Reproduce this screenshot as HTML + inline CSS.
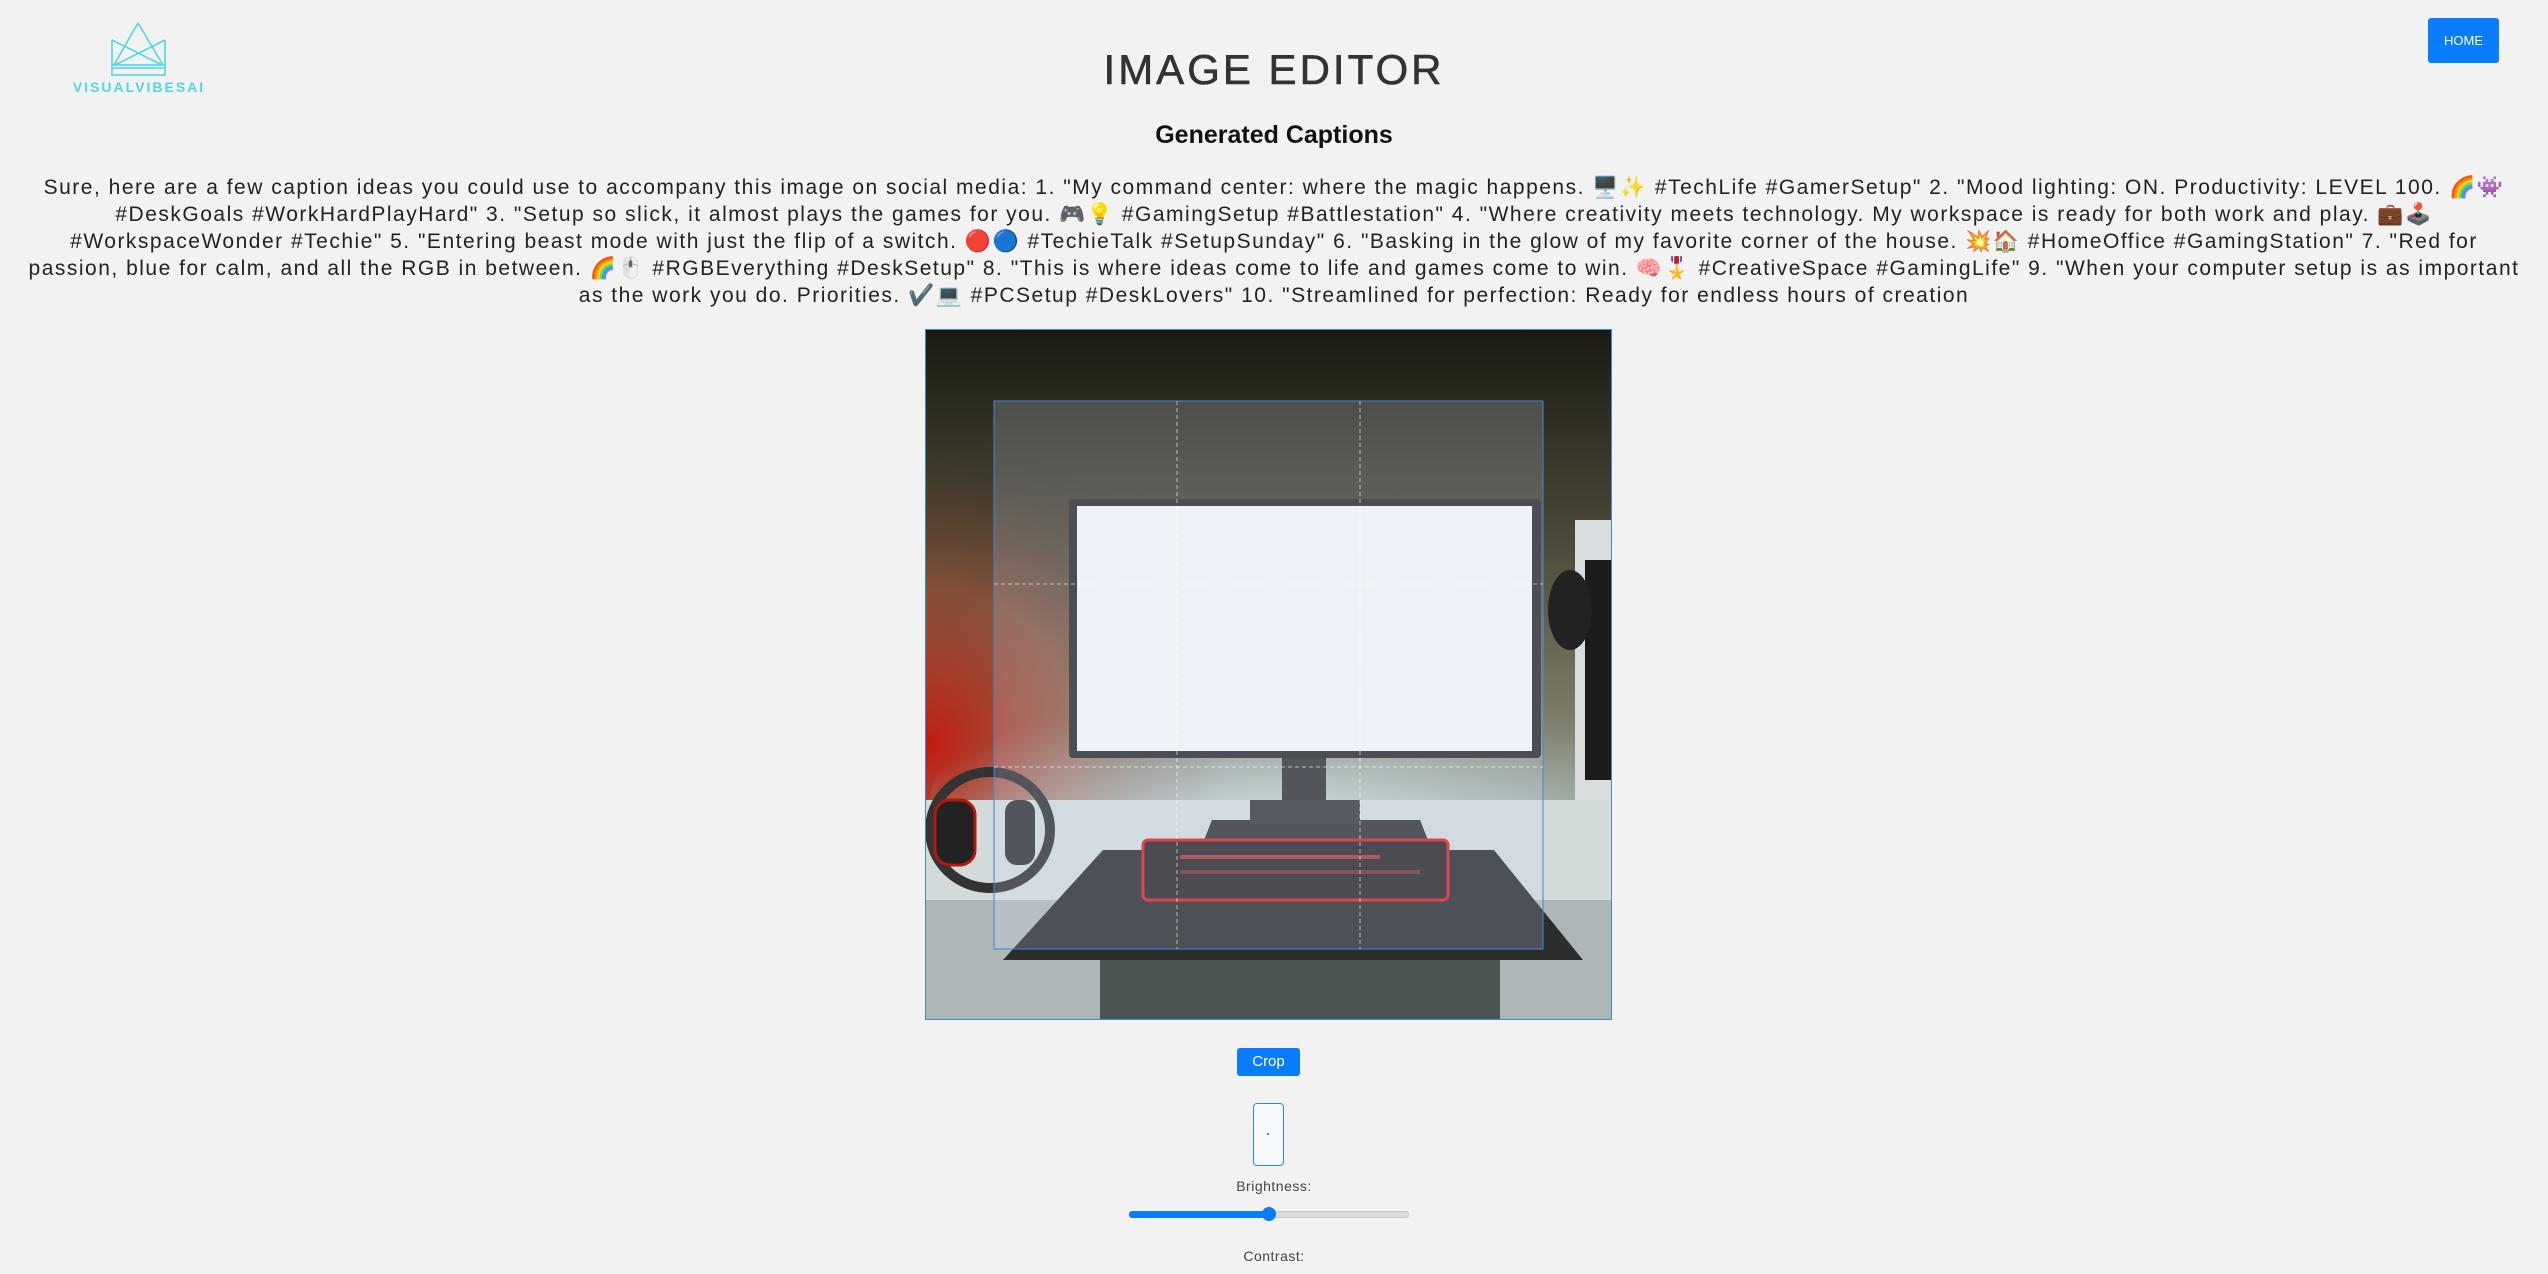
<!DOCTYPE html>
<html><head><meta charset="utf-8"><style>
html,body{margin:0;padding:0;background:#f2f2f2;width:2548px;height:1274px;overflow:hidden;font-family:"Liberation Sans",sans-serif;}
.abs{position:absolute}
#title{left:0;width:2548px;top:48px;text-align:center;font-size:42px;color:#333;letter-spacing:3px;line-height:44px;-webkit-text-stroke:0.6px #333}
#sub{left:0;width:2548px;top:120px;text-align:center;font-size:25px;font-weight:bold;color:#111;line-height:30px}
#cap{left:0;width:2548px;top:174px;text-align:center;font-size:21px;color:#222;line-height:27px;letter-spacing:1.5px}
#cap div{white-space:nowrap}
#home{left:2428px;top:18px;width:71px;height:45px;background:#0a7cff;color:#fff;font-size:13px;line-height:45px;text-align:center;border-radius:3px}
#crop{left:1237px;top:1048px;width:63px;height:28px;background:#0a7cff;color:#fff;font-size:15px;line-height:28px;text-align:center;border-radius:3px}
#box{left:1253px;top:1103px;width:29px;height:61px;border:1.5px solid #2a86ff;border-radius:4px;background:#f7f8fc}
.lbl{left:0;width:2548px;text-align:center;font-size:14px;color:#444;letter-spacing:.5px}
</style></head><body>
<svg class="abs" style="left:0;top:0" width="240" height="100">
<g fill="none" stroke="#4fd6e6" stroke-width="1.6">
<path d="M138 23 L114 65 M138 23 L163 65 M112 40 L112 65 M165 40 L165 65 M112 40 L162 65 M165 40 L115 65"/>
<rect x="112" y="65" width="53" height="10"/>
<line x1="112" y1="68" x2="165" y2="68"/>
</g>
<text x="139" y="92" text-anchor="middle" font-family="Liberation Sans" font-weight="bold" font-size="14" fill="#4fd6e6" letter-spacing="2">VISUALVIBESAI</text>
</svg>
<div id="title" class="abs">IMAGE EDITOR</div>
<div id="home" class="abs">HOME</div>
<div id="sub" class="abs">Generated Captions</div>
<div id="cap" class="abs">
<div>Sure, here are a few caption ideas you could use to accompany this image on social media: 1. "My command center: where the magic happens. 🖥️✨ #TechLife #GamerSetup" 2. "Mood lighting: ON. Productivity: LEVEL 100. 🌈👾</div>
<div>#DeskGoals #WorkHardPlayHard" 3. "Setup so slick, it almost plays the games for you. 🎮💡 #GamingSetup #Battlestation" 4. "Where creativity meets technology. My workspace is ready for both work and play. 💼🕹️</div>
<div>#WorkspaceWonder #Techie" 5. "Entering beast mode with just the flip of a switch. 🔴🔵 #TechieTalk #SetupSunday" 6. "Basking in the glow of my favorite corner of the house. 💥🏠 #HomeOffice #GamingStation" 7. "Red for</div>
<div>passion, blue for calm, and all the RGB in between. 🌈🖱️ #RGBEverything #DeskSetup" 8. "This is where ideas come to life and games come to win. 🧠🎖️ #CreativeSpace #GamingLife" 9. "When your computer setup is as important</div>
<div>as the work you do. Priorities. ✔️💻 #PCSetup #DeskLovers" 10. "Streamlined for perfection: Ready for endless hours of creation</div>
</div>
<svg class="abs" style="left:925px;top:329px" width="687" height="691" viewBox="925 329 687 691">
<defs>
<linearGradient id="wall" x1="0" y1="0" x2="0" y2="1"><stop offset="0" stop-color="#1b1a12"/><stop offset=".3" stop-color="#4a4836"/><stop offset=".55" stop-color="#7a7a66"/><stop offset=".7" stop-color="#9aa69a"/></linearGradient>
<radialGradient id="red" cx="0" cy=".6" r=".45"><stop offset="0" stop-color="#c21a10"/><stop offset=".5" stop-color="#a04a30" stop-opacity=".6"/><stop offset="1" stop-color="#3a2a20" stop-opacity="0"/></radialGradient>
<radialGradient id="glow" cx=".5" cy=".7" r=".6"><stop offset="0" stop-color="#eef6f4"/><stop offset="1" stop-color="#a8b8b4" stop-opacity="0"/></radialGradient>
</defs>
<rect x="925" y="329" width="687" height="691" fill="url(#wall)"/>
<rect x="925" y="329" width="687" height="691" fill="url(#red)"/>
<ellipse cx="1290" cy="800" rx="360" ry="130" fill="url(#glow)"/>
<rect x="925" y="800" width="687" height="220" fill="#d2dada"/>
<rect x="925" y="900" width="687" height="120" fill="#8a9494" opacity=".5"/>
<rect x="1100" y="960" width="400" height="60" fill="#4a5452"/>
<rect x="1575" y="520" width="37" height="280" fill="#d8dcdc"/>
<rect x="1585" y="560" width="27" height="220" fill="#1a1c1c"/>
<ellipse cx="1570" cy="610" rx="22" ry="40" fill="#222"/>
<ellipse cx="990" cy="830" rx="60" ry="58" fill="none" stroke="#333" stroke-width="10"/>
<rect x="935" y="800" width="40" height="65" rx="15" fill="#222" stroke="#b01a10" stroke-width="3"/>
<rect x="1005" y="800" width="30" height="65" rx="12" fill="#333"/>
<path d="M1103 850 L1494 850 L1583 960 L1003 960 Z" fill="#2c2e2e"/>
<path d="M1212 820 L1420 820 L1432 850 L1200 850 Z" fill="#333"/>
<rect x="1282" y="755" width="44" height="52" fill="#333"/>
<rect x="1250" y="800" width="110" height="24" fill="#3a3a3a"/>
<rect x="1069" y="499" width="472" height="259" rx="4" fill="#2a2a2a"/>
<rect x="1077" y="506" width="455" height="245" fill="#f6f6f6"/>
<rect x="1143" y="840" width="305" height="60" rx="5" fill="#2a2626" stroke="#e02020" stroke-width="3"/>
<g fill="#c44"><rect x="1180" y="855" width="200" height="4" opacity=".7"/><rect x="1180" y="870" width="240" height="4" opacity=".4"/></g>
<rect x="994" y="401" width="549" height="548" fill="rgba(210,225,255,.2)" stroke="#3a8ae0" stroke-width="1"/>
<g stroke="rgba(255,255,255,.6)" stroke-dasharray="4 3" stroke-width="1"><line x1="1177" y1="401" x2="1177" y2="949"/><line x1="1360" y1="401" x2="1360" y2="949"/><line x1="994" y1="584" x2="1543" y2="584"/><line x1="994" y1="767" x2="1543" y2="767"/></g>
<rect x="925.5" y="329.5" width="686" height="690" fill="none" stroke="#3a8ae0"/>
</svg>
<div id="crop" class="abs">Crop</div>
<div id="box" class="abs"><div style="position:absolute;left:13px;top:29px;width:2px;height:2px;background:#2a86ff"></div></div>
<div class="abs lbl" style="top:1178px">Brightness:</div>
<div class="abs" style="left:1129px;top:1211px;width:278px;height:5px;background:#ddd;border:1px solid #c8c8c8;border-radius:3px"></div>
<div class="abs" style="left:1129px;top:1211px;width:140px;height:7px;background:#0a7cff;border-radius:3px"></div>
<div class="abs" style="left:1262px;top:1207px;width:14px;height:14px;background:#0a7cff;border-radius:50%"></div>
<div class="abs lbl" style="top:1248px">Contrast:</div>
</body></html>
